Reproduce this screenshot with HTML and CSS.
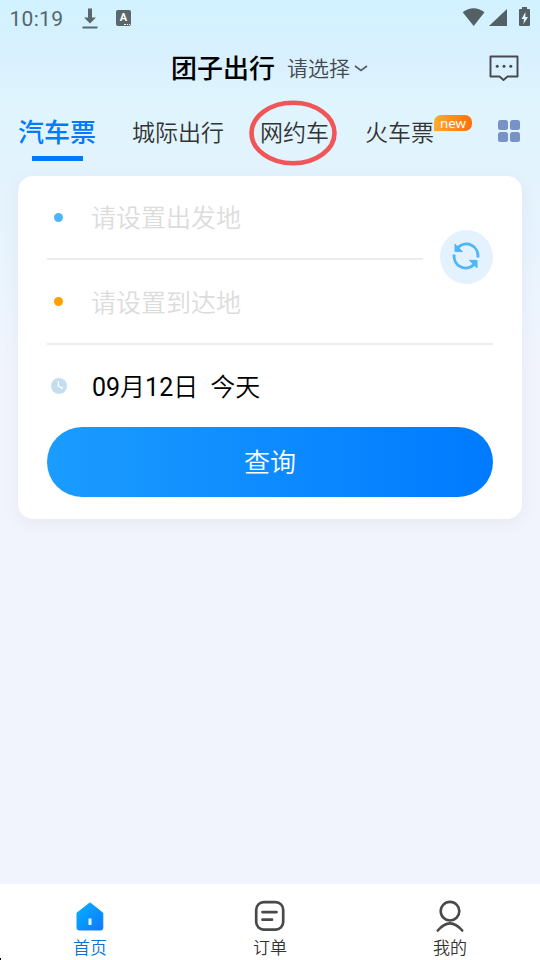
FILE: index.html
```
<!DOCTYPE html>
<html lang="zh-CN">
<head>
<meta charset="utf-8">
<title>团子出行</title>
<link rel="stylesheet" href="styles.css">
</head>
<body>
<div class="app">
  <div class="status">
    <span class="time">10:19</span>
    <svg class="download" width="16" height="22" viewBox="0 0 16 22"><path d="M6 .5h4v9h4l-6 6-6-6h4z" fill="#5a686c"/><path d="M.5 19.5h15" stroke="#5a686c" stroke-width="2"/></svg>
    <div class="lang"><span>A</span><i></i></div>
    <svg class="signals" width="70" height="22" viewBox="0 0 70 22" fill="#526166">
      <path d="M.7 5.2Q11.5-2.5 22.5 5.2L11.7 19z"/>
      <path d="M45 2v17H27z"/>
      <path d="M60 0h5v2h2q1 0 1 1v15q0 1-1 1h-9q-1 0-1-1V3q0-1 1-1h2z"/>
      <path d="M63.5 5l-4 7h2.5l-.5 5 4.5-7h-2.7z" fill="#e4f6ff"/>
    </svg>
  </div>

  <header class="header">
    <h1>团子出行</h1>
    <div class="city">请选择</div>
    <svg class="chevron" width="16" height="10" viewBox="0 0 16 10" fill="none" stroke="#555d65" stroke-width="1.7"><path d="M2 2l6 4.5L14 2"/></svg>
    <svg class="message" width="30" height="28" viewBox="0 0 30 28"><path d="M1.5 1.5h27v20h-10l-4 3.5-4-3.5h-9z" fill="none" stroke="#464a4d" stroke-width="1.9" stroke-linejoin="round"/><g fill="#464a4d"><circle cx="8.2" cy="11.2" r="1.5"/><circle cx="15" cy="11.2" r="1.5"/><circle cx="21.8" cy="11.2" r="1.5"/></g></svg>
  </header>

  <nav class="tabs">
    <div class="tab active">汽车票</div>
    <div class="tab intercity">城际出行</div>
    <div class="tab hailing">网约车<svg class="ring" width="90" height="68" viewBox="0 0 90 68"><ellipse cx="45" cy="34" rx="41.5" ry="30.3" fill="none" stroke="#f15558" stroke-width="4.6"/></svg></div>
    <div class="tab train">火车票<span class="new">new</span></div>
    <div class="grid"><i></i><i></i><i></i><i></i></div>
  </nav>

  <main class="card">
    <div class="places">
      <div class="row from"><span class="dot blue"></span><span class="hint">请设置出发地</span></div>
      <div class="row to"><span class="dot orange"></span><span class="hint">请设置到达地</span></div>
      <div class="swap">
        <svg width="30" height="30" viewBox="0 0 30 30"><g fill="none" stroke="#4db6fa" stroke-width="2.9"><path d="M7 6.4A11.7 11.7 0 0 1 26.8 16.5"/><path d="M23 23.6A11.7 11.7 0 0 1 3.2 13.5"/></g><path d="M4 3.2v7.4h7.5zM26 26.8v-7.4h-7.5z" fill="#4db6fa" stroke="#4db6fa" stroke-linejoin="round"/></svg>
      </div>
    </div>
    <div class="row date">
      <svg class="clock" width="16" height="16" viewBox="0 0 16 16"><circle cx="8" cy="8" r="8" fill="#c4deef"/><path d="M7.4 3v5.2l4.6 2.4" fill="none" stroke="#fff" stroke-width="1.3"/></svg>
      <span class="day">09月12日</span><span class="today">今天</span>
    </div>
    <div class="search">查询</div>
  </main>

  <footer class="bottom">
    <div class="item current">
      <svg width="32" height="32" viewBox="0 0 32 32"><defs><linearGradient id="home" x1="0" y1="0" x2="1" y2="1"><stop offset="0.2" stop-color="#05a6ff"/><stop offset="1" stop-color="#1377fa"/></linearGradient></defs><path d="M16 2.8L28.8 13v15q0 2-2 2H5q-2 0-2-2V13z" fill="url(#home)" stroke="url(#home)" stroke-linejoin="round"/><path d="M14.5 18.5h3V25h-3z" fill="#e8faff"/></svg>
      <span>首页</span>
    </div>
    <div class="item">
      <svg width="32" height="32" viewBox="0 0 32 32" fill="none" stroke="#47494b" stroke-width="2.7"><rect x="2.2" y="2.2" width="27" height="27.4" rx="7.5"/><path d="M8.5 12.1h14M8.5 19.7h9.5" stroke-linecap="round"/></svg>
      <span>订单</span>
    </div>
    <div class="item">
      <svg width="32" height="32" viewBox="0 0 32 32" fill="none" stroke="#47494b" stroke-width="2.6"><circle cx="16" cy="11.2" r="9.3"/><path d="M3.8 30.5Q16 16.2 28.2 30.5" stroke-linecap="round"/></svg>
      <span>我的</span>
    </div>
    <i class="corner"></i>
  </footer>
</div>
</body>
</html>
```

FILE: styles.css
```
* { box-sizing: border-box; }
body { margin: 0; font-family: Roboto, "Noto Sans CJK SC DemiLight", "Noto Sans CJK SC", sans-serif; font-weight: 400; }
svg { display: block; flex: none; }
.app {
  width: 540px; height: 960px; display: flex; flex-direction: column; overflow: hidden;
  background: linear-gradient(180deg, #d2f2ff 0, #d5f1ff 34px, #daf0fe 67px, #dff5fe 98px, #e2f3fd 160px, #e8f4fd 250px, #f1f4fd 370px, #f1f4fd 100%);
}
.status { height: 36px; display: flex; align-items: center; padding: 2px 9px 0 9.5px; color: #56656a; }
.time { width: 72.5px; font-size: 21px; letter-spacing: .3px; }
.lang { width: 15px; height: 16px; margin: -2px 0 0 18px; border-radius: 2px; background: #5a686c; color: #fff; font-size: 11px; font-weight: 700; line-height: 15px; text-align: center; position: relative; }
.lang i { position: absolute; right: 1px; bottom: 1px; width: 6px; border-bottom: 1px dotted #fff; }
.signals { margin-left: auto; margin-right: -1px; margin-top: -2px; }

.header { height: 64px; display: flex; align-items: center; padding: 1px 21px 0 171px; }
.header h1 { margin: -3px 0 0; width: 116px; font-family: "Noto Sans CJK SC", sans-serif; font-size: 26px; font-weight: 500; line-height: 40px; color: #000; }
.city { width: 66px; font-size: 21px; line-height: 42px; color: #45494d; }
.message { margin-left: auto; margin-top: 1px; }

.tabs { height: 76px; display: flex; align-items: flex-start; padding-left: 18px; }
.tab { position: relative; height: 64px; line-height: 67px; font-size: 23px; color: #333; white-space: nowrap; }
.active { width: 114px; font-family: "Noto Sans CJK SC", sans-serif; font-size: 26px; font-weight: 500; color: #007aff; line-height: 61px; }
.active::after { content: ""; position: absolute; left: 14px; top: 56px; width: 51px; height: 5px; background: #007aff; }
.intercity { width: 128px; }
.hailing { width: 105px; }
.train { width: 132px; }
.ring { position: absolute; left: -12.5px; top: -1px; }
.new { position: absolute; left: 69px; top: 15px; width: 38px; height: 16px; border-radius: 7px 7px 7px 0; background: linear-gradient(90deg, #ffab2b, #ff6f0e); color: #fff; font: 400 13.3px/17px "Noto Sans", sans-serif; text-align: center; }
.grid { display: grid; grid-template-columns: 10px 10px; gap: 2px; margin: 20px 0 0 1px; }
.grid i { width: 10px; height: 10px; border-radius: 2.5px; background: #7892c5; }

.card { height: 343px; margin: 0 18px; padding: 0 29px; border-radius: 15px; background: #fff; box-shadow: 0 4px 16px rgba(120, 130, 120, .09); }
.places { position: relative; }
.row { display: flex; align-items: center; font-size: 25px; height: 85px; }
.from { width: 376px; height: 84px; border-bottom: 2px solid #ededed; }
.to { border-bottom: 2px solid #ededed; }
.dot { width: 9px; height: 9px; border-radius: 50%; margin: 0 28px 0 7px; }
.blue { background: #4db6fa; }
.orange { background: #ff9f00; }
.hint { color: #dcdcdc; line-height: 36px; margin-top: 4px; }
.swap { position: absolute; right: 0; top: 54px; width: 53px; height: 54px; padding: 0 1px 2px 0; border-radius: 50%; background: #e4f2ff; display: flex; align-items: center; justify-content: center; }
.date { height: 82px; color: #000; }
.day, .today { margin-top: -2px; }
.clock { margin: 0 25px 0 4px; }
.today { margin-left: 12px; }
.search { height: 70px; border-radius: 35px; background: linear-gradient(90deg, #1b9cff, #007aff); color: #fff; font-size: 26px; line-height: 72px; text-align: center; }

.bottom { height: 76px; margin-top: auto; display: flex; background: #fff; position: relative; }
.item { flex: 1; display: flex; flex-direction: column; align-items: center; padding-top: 16px; font-size: 17px; line-height: 30px; color: #333; }
.item span { margin-top: 1px; }
.current { color: #0b72dc; }
.corner { position: absolute; left: 0; bottom: 0; width: 1px; height: 2px; background: #000; }
```
